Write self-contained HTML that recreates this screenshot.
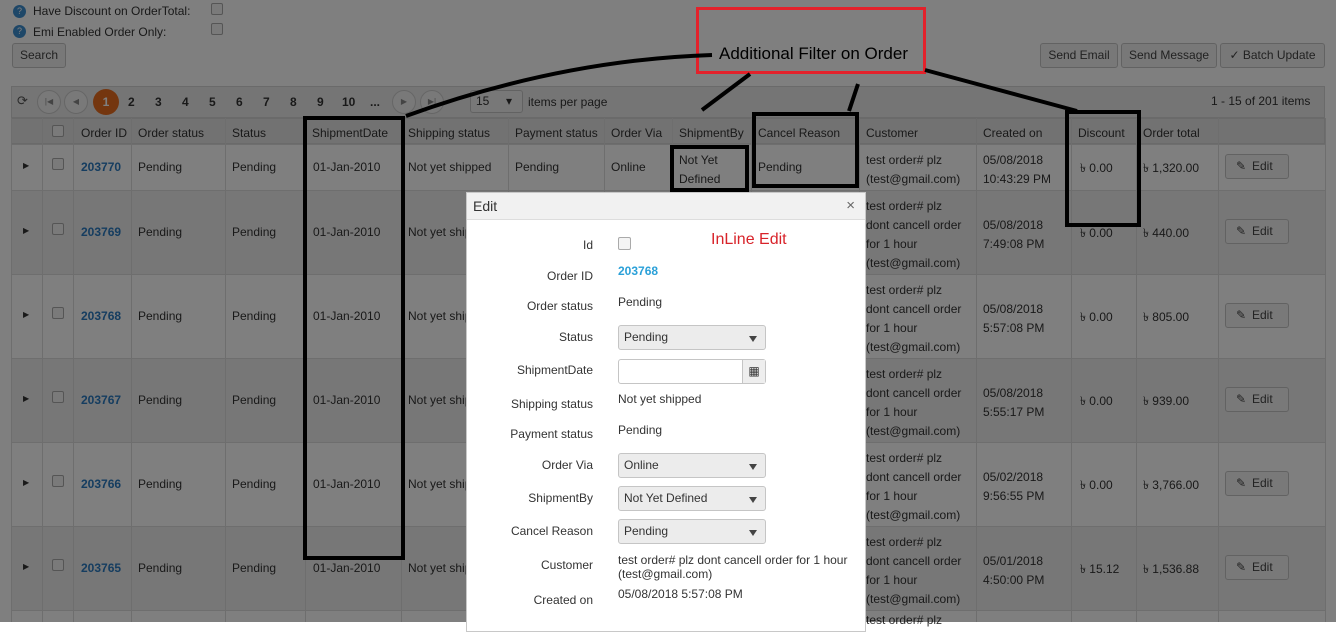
<!DOCTYPE html>
<html><head><meta charset="utf-8"><style>
*{box-sizing:border-box;margin:0;padding:0}
body{width:1336px;height:622px;overflow:hidden;background:#fff;font-family:"Liberation Sans",sans-serif;font-size:12px;color:#333;position:relative}
.a{position:absolute;white-space:nowrap}
.btn{position:absolute;border:1px solid #c5c5c5;background:#f0f0f0;border-radius:3px;height:25px;line-height:23px;padding:0 7px;color:#444;font-size:12px;white-space:nowrap;text-align:center}
.cb{position:absolute;width:12px;height:12px;border:1px solid #aaa;border-radius:2px;background:#f4f4f4}
.row{position:absolute;left:11px;width:1314px;border-top:1px solid #ddd}
.vl{position:absolute;top:118px;height:504px;width:1px;background:#ddd}
.lnk{color:#2a7ac0;font-weight:bold}
.edit{position:absolute;left:1225px;width:64px;height:25px;border:1px solid #c5c5c5;border-radius:3px;background:#f2f2f2;line-height:23px;padding-left:26px;color:#444}
.edit:before{content:"✎";position:absolute;left:10px;top:0;font-size:12px}
.pg{position:absolute;top:95px;font-size:12px;font-weight:bold;color:#333}
.circ{position:absolute;top:90px;width:24px;height:24px;border-radius:50%;border:1px solid #ccc;background:#f2f2f2;font-size:8px;text-align:center;line-height:22px;color:#888}
.bx{position:absolute;border:4px solid #000}
.modal{position:absolute;left:466px;top:192px;width:400px;height:440px;background:#fff;border:1px solid #c8c8c8}
.mh{height:27px;background:#f1f1f1;border-bottom:1px solid #ddd;line-height:26px;padding-left:6px;font-size:14px;color:#333}
.ml{position:absolute;right:272px;color:#333;font-size:12px}
.mv{position:absolute;left:151px;color:#333;font-size:12px}
.sel{position:absolute;left:151px;width:148px;height:25px;border:1px solid #c5c5c5;border-radius:3px;background:#ececec;line-height:23px;padding-left:5px;color:#333}
.sel:after{content:"";position:absolute;right:8px;top:10px;border-left:4px solid transparent;border-right:4px solid transparent;border-top:6px solid #444}
.q{position:absolute;width:13px;height:13px;border-radius:50%;background:#3d8fd0;color:#fff;font-size:9px;text-align:center;line-height:13px}
</style></head><body>

<div class="q" style="left:13px;top:5px">?</div>
<div class="a" style="left:33px;top:4px;font-size:12px">Have Discount on OrderTotal:</div>
<div class="cb" style="left:211px;top:3px"></div>
<div class="q" style="left:13px;top:25px">?</div>
<div class="a" style="left:33px;top:25px">Emi Enabled Order Only:</div>
<div class="cb" style="left:211px;top:23px"></div>
<div class="btn" style="left:12px;top:43px;width:54px">Search</div>

<div class="btn" style="left:1040px;top:43px;width:78px">Send Email</div>
<div class="btn" style="left:1121px;top:43px;width:96px">Send Message</div>
<div class="btn" style="left:1220px;top:43px;width:105px">✓ Batch Update</div>

<!-- pager -->
<div class="a" style="left:11px;top:86px;width:1314px;height:32px;background:#ebebeb;border:1px solid #d5d5d5"></div>
<div class="a" style="left:17px;top:93px;font-size:13px;color:#555">⟳</div>
<div class="circ" style="left:37px">|◀</div><div class="circ" style="left:64px">◀</div>
<div class="a" style="left:93px;top:89px;width:26px;height:26px;border-radius:50%;background:#e86c1e;color:#fff;text-align:center;line-height:26px;font-weight:bold">1</div>
<div class="pg" style="left:128px">2</div><div class="pg" style="left:155px">3</div><div class="pg" style="left:182px">4</div><div class="pg" style="left:209px">5</div><div class="pg" style="left:236px">6</div><div class="pg" style="left:263px">7</div><div class="pg" style="left:290px">8</div><div class="pg" style="left:317px">9</div><div class="pg" style="left:342px">10</div><div class="pg" style="left:370px">...</div>
<div class="circ" style="left:392px">▶</div><div class="circ" style="left:420px">▶|</div>
<div class="a" style="left:470px;top:90px;width:53px;height:23px;border:1px solid #c5c5c5;border-radius:3px;background:#f0f0f0;padding-left:5px;line-height:21px">15 &nbsp;&nbsp;&nbsp;&nbsp;▾</div>
<div class="a" style="left:528px;top:95px">items per page</div>
<div class="a" style="left:1211px;top:94px">1 - 15 of 201 items</div>

<!-- header -->
<div class="a" style="left:11px;top:118px;width:1314px;height:26px;background:#e4e4e4;border:1px solid #d5d5d5"></div>
<div class="cb" style="left:52px;top:125px"></div>
<div class="a" style="left:81px;top:126px">Order ID</div><div class="a" style="left:138px;top:126px">Order status</div><div class="a" style="left:232px;top:126px">Status</div><div class="a" style="left:312px;top:126px">ShipmentDate</div><div class="a" style="left:408px;top:126px">Shipping status</div><div class="a" style="left:515px;top:126px">Payment status</div><div class="a" style="left:611px;top:126px">Order Via</div><div class="a" style="left:679px;top:126px">ShipmentBy</div><div class="a" style="left:758px;top:126px">Cancel Reason</div><div class="a" style="left:866px;top:126px">Customer</div><div class="a" style="left:983px;top:126px">Created on</div><div class="a" style="left:1078px;top:126px">Discount</div><div class="a" style="left:1143px;top:126px">Order total</div>

<!-- rows backgrounds -->
<div class="row" style="top:144px;height:46px;background:#fff"></div>
<div class="row" style="top:190px;height:84px;background:#efefef"></div>
<div class="row" style="top:274px;height:84px;background:#fff"></div>
<div class="row" style="top:358px;height:84px;background:#efefef"></div>
<div class="row" style="top:442px;height:84px;background:#fff"></div>
<div class="row" style="top:526px;height:84px;background:#efefef"></div>
<div class="row" style="top:610px;height:20px;background:#fff"></div>
<div class="vl" style="left:11px"></div><div class="vl" style="left:42px"></div><div class="vl" style="left:73px"></div><div class="vl" style="left:131px"></div><div class="vl" style="left:225px"></div><div class="vl" style="left:305px"></div><div class="vl" style="left:401px"></div><div class="vl" style="left:508px"></div><div class="vl" style="left:604px"></div><div class="vl" style="left:672px"></div><div class="vl" style="left:751px"></div><div class="vl" style="left:859px"></div><div class="vl" style="left:976px"></div><div class="vl" style="left:1071px"></div><div class="vl" style="left:1136px"></div><div class="vl" style="left:1218px"></div><div class="vl" style="left:1325px"></div>

<!-- row1 -->
<div class="a" style="left:23px;top:161px;font-size:8px">▶</div><div class="cb" style="left:52px;top:158px"></div>
<div class="a lnk" style="left:81px;top:160px">203770</div><div class="a" style="left:138px;top:160px">Pending</div><div class="a" style="left:232px;top:160px">Pending</div><div class="a" style="left:313px;top:160px">01-Jan-2010</div><div class="a" style="left:408px;top:160px">Not yet shipped</div><div class="a" style="left:515px;top:160px">Pending</div><div class="a" style="left:611px;top:160px">Online</div>
<div class="a" style="left:679px;top:151px;line-height:19px">Not Yet<br>Defined</div><div class="a" style="left:758px;top:160px">Pending</div>
<div class="a" style="left:866px;top:151px;line-height:19px">test order# plz<br>(test@gmail.com)</div>
<div class="a" style="left:983px;top:151px;line-height:19px">05/08/2018<br>10:43:29 PM</div>
<div class="a" style="left:1080px;top:160px">৳ 0.00</div><div class="a" style="left:1143px;top:160px">৳ 1,320.00</div>
<div class="edit" style="top:154px">Edit</div>

<!-- rows 2-6 -->
<div class="a" style="left:23px;top:226px;font-size:8px">▶</div><div class="cb" style="left:52px;top:223px"></div>
<div class="a lnk" style="left:81px;top:225px">203769</div><div class="a" style="left:138px;top:225px">Pending</div><div class="a" style="left:232px;top:225px">Pending</div><div class="a" style="left:313px;top:225px">01-Jan-2010</div><div class="a" style="left:408px;top:225px">Not yet shipped</div>
<div class="a" style="left:866px;top:197px;line-height:19px">test order# plz<br>dont cancell order<br>for 1 hour<br>(test@gmail.com)</div>
<div class="a" style="left:983px;top:216px;line-height:19px">05/08/2018<br>7:49:08 PM</div>
<div class="a" style="left:1080px;top:225px">৳ 0.00</div><div class="a" style="left:1143px;top:225px">৳ 440.00</div><div class="edit" style="top:219px">Edit</div>

<div class="a" style="left:23px;top:310px;font-size:8px">▶</div><div class="cb" style="left:52px;top:307px"></div>
<div class="a lnk" style="left:81px;top:309px">203768</div><div class="a" style="left:138px;top:309px">Pending</div><div class="a" style="left:232px;top:309px">Pending</div><div class="a" style="left:313px;top:309px">01-Jan-2010</div><div class="a" style="left:408px;top:309px">Not yet shipped</div>
<div class="a" style="left:866px;top:281px;line-height:19px">test order# plz<br>dont cancell order<br>for 1 hour<br>(test@gmail.com)</div>
<div class="a" style="left:983px;top:300px;line-height:19px">05/08/2018<br>5:57:08 PM</div>
<div class="a" style="left:1080px;top:309px">৳ 0.00</div><div class="a" style="left:1143px;top:309px">৳ 805.00</div><div class="edit" style="top:303px">Edit</div>

<div class="a" style="left:23px;top:394px;font-size:8px">▶</div><div class="cb" style="left:52px;top:391px"></div>
<div class="a lnk" style="left:81px;top:393px">203767</div><div class="a" style="left:138px;top:393px">Pending</div><div class="a" style="left:232px;top:393px">Pending</div><div class="a" style="left:313px;top:393px">01-Jan-2010</div><div class="a" style="left:408px;top:393px">Not yet shipped</div>
<div class="a" style="left:866px;top:365px;line-height:19px">test order# plz<br>dont cancell order<br>for 1 hour<br>(test@gmail.com)</div>
<div class="a" style="left:983px;top:384px;line-height:19px">05/08/2018<br>5:55:17 PM</div>
<div class="a" style="left:1080px;top:393px">৳ 0.00</div><div class="a" style="left:1143px;top:393px">৳ 939.00</div><div class="edit" style="top:387px">Edit</div>

<div class="a" style="left:23px;top:478px;font-size:8px">▶</div><div class="cb" style="left:52px;top:475px"></div>
<div class="a lnk" style="left:81px;top:477px">203766</div><div class="a" style="left:138px;top:477px">Pending</div><div class="a" style="left:232px;top:477px">Pending</div><div class="a" style="left:313px;top:477px">01-Jan-2010</div><div class="a" style="left:408px;top:477px">Not yet shipped</div>
<div class="a" style="left:866px;top:449px;line-height:19px">test order# plz<br>dont cancell order<br>for 1 hour<br>(test@gmail.com)</div>
<div class="a" style="left:983px;top:468px;line-height:19px">05/02/2018<br>9:56:55 PM</div>
<div class="a" style="left:1080px;top:477px">৳ 0.00</div><div class="a" style="left:1143px;top:477px">৳ 3,766.00</div><div class="edit" style="top:471px">Edit</div>

<div class="a" style="left:23px;top:562px;font-size:8px">▶</div><div class="cb" style="left:52px;top:559px"></div>
<div class="a lnk" style="left:81px;top:561px">203765</div><div class="a" style="left:138px;top:561px">Pending</div><div class="a" style="left:232px;top:561px">Pending</div><div class="a" style="left:313px;top:561px">01-Jan-2010</div><div class="a" style="left:408px;top:561px">Not yet shipped</div>
<div class="a" style="left:866px;top:533px;line-height:19px">test order# plz<br>dont cancell order<br>for 1 hour<br>(test@gmail.com)</div>
<div class="a" style="left:983px;top:552px;line-height:19px">05/01/2018<br>4:50:00 PM</div>
<div class="a" style="left:1080px;top:561px">৳ 15.12</div><div class="a" style="left:1143px;top:561px">৳ 1,536.88</div><div class="edit" style="top:555px">Edit</div>
<div class="a" style="left:866px;top:613px">test order# plz</div>

<!-- dim overlay -->
<div class="a" style="left:0;top:0;width:1336px;height:622px;background:rgba(0,0,0,0.5)"></div>

<!-- annotations -->
<div class="bx" style="left:303px;top:116px;width:102px;height:444px"></div>
<div class="bx" style="left:670px;top:145px;width:79px;height:47px"></div>
<div class="bx" style="left:752px;top:112px;width:107px;height:76px"></div>
<div class="bx" style="left:1065px;top:110px;width:76px;height:117px"></div>
<div class="a" style="left:696px;top:7px;width:230px;height:67px;border:3px solid #e3222b;background:#7f7f7f"></div>
<div class="a" style="left:719px;top:44px;font-size:17px;color:#000">Additional Filter on Order</div>
<svg class="a" style="left:0;top:0" width="1336" height="622"><g stroke="#000" stroke-width="4" fill="none">
<path d="M712,55 Q560,60 406,116"/><path d="M750,74 L702,110"/><path d="M858,84 L849,111"/><path d="M925,70 L1077,111"/></g></svg>

<!-- modal -->
<div class="modal"><div class="mh">Edit<span style="position:absolute;right:10px;top:0;font-size:15px;color:#666">×</span></div>
<div class="ml" style="top:45px">Id</div><div class="a" style="left:151px;top:44px;width:13px;height:13px;border:1px solid #aaa;border-radius:2px;background:#f4f4f4"></div>
<div class="a" style="left:244px;top:38px;font-size:16px;color:#d8232a">InLine Edit</div>
<div class="ml" style="top:76px">Order ID</div><div class="mv" style="top:71px;color:#2aa0d8;font-weight:bold">203768</div>
<div class="ml" style="top:106px">Order status</div><div class="mv" style="top:102px">Pending</div>
<div class="ml" style="top:137px">Status</div><div class="sel" style="top:132px">Pending</div>
<div class="ml" style="top:170px">ShipmentDate</div>
<div class="a" style="left:151px;top:166px;width:148px;height:25px;border:1px solid #c5c5c5;border-radius:3px;background:#fff"></div>
<div class="a" style="left:275px;top:167px;width:23px;height:23px;border-left:1px solid #c5c5c5;background:#eee;text-align:center;line-height:22px;font-size:12px">▦</div>
<div class="ml" style="top:204px">Shipping status</div><div class="mv" style="top:199px">Not yet shipped</div>
<div class="ml" style="top:234px">Payment status</div><div class="mv" style="top:230px">Pending</div>
<div class="ml" style="top:265px">Order Via</div><div class="sel" style="top:260px">Online</div>
<div class="ml" style="top:298px">ShipmentBy</div><div class="sel" style="top:293px">Not Yet Defined</div>
<div class="ml" style="top:331px">Cancel Reason</div><div class="sel" style="top:326px">Pending</div>
<div class="ml" style="top:365px">Customer</div><div class="mv" style="top:360px;line-height:14px">test order# plz dont cancell order for 1 hour<br>(test@gmail.com)</div>
<div class="ml" style="top:400px">Created on</div><div class="mv" style="top:394px">05/08/2018 5:57:08 PM</div>
</div>
</body></html>
